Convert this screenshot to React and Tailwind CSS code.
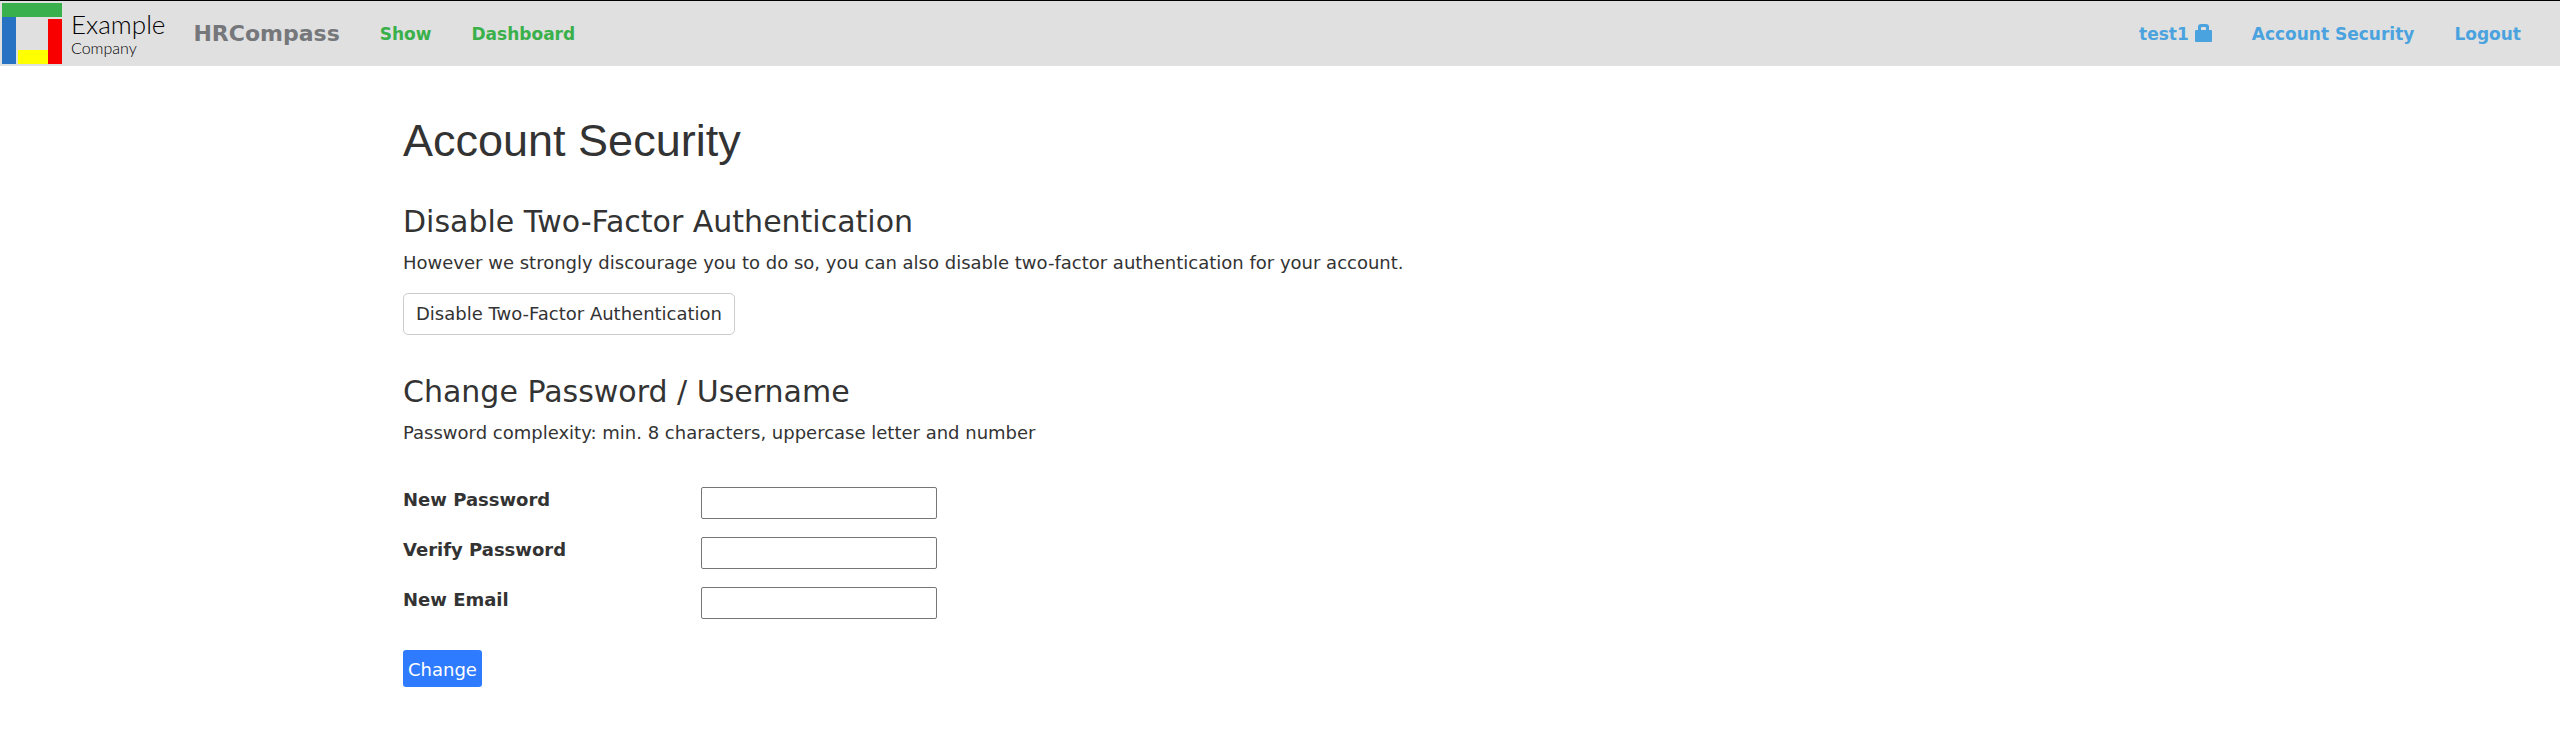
const navLink = "text-[17px] leading-6 font-bold hover:underline";

const fields = [
  { id: "new-password", label: "New Password", type: "password" },
  { id: "verify-password", label: "Verify Password", type: "password" },
  { id: "new-email", label: "New Email", type: "email" },
];

function Logo() {
  return (
    <a href="#home" aria-label="Example Company" className="flex items-center gap-2 pl-0.5 text-black">
      <svg width="61" height="63" viewBox="0 0 61 63" aria-hidden="true">
        <rect width="61" height="63" fill="#d6e6d8" opacity="0.5" />
        <rect x="14" y="15" width="32" height="33" fill="#e0e0e0" />
        <rect x="0" y="1" width="60" height="14" fill="#39b04c" />
        <rect x="0" y="15" width="14" height="47" fill="#2872c4" />
        <rect x="16" y="48" width="30" height="14" fill="#ffff00" />
        <rect x="46" y="17" width="14" height="45" fill="#f80000" />
      </svg>
      <span className="flex flex-col gap-0.5 pb-0.5 font-[Lato,sans-serif]">
        <span className="text-[26px] leading-7 font-light">Example</span>
        <span className="text-base leading-4 font-light">Company</span>
      </span>
    </a>
  );
}

function LockIcon() {
  return (
    <svg width="17" height="18" viewBox="0 0 17 18" fill="#4aa3df" className="mb-0.5" aria-hidden="true">
      <path fillRule="evenodd" d="M1 6H3V3Q3 0 6 0H11Q14 0 14 3V6H16Q17 6 17 7V17Q17 18 16 18H1Q0 18 0 17V7Q0 6 1 6ZM6 6H11V4Q11 3 10 3H7Q6 3 6 4Z" />
    </svg>
  );
}

export default function App() {
  return (
    <div className="bg-white font-[Verdana,'DejaVu_Sans',sans-serif] text-lg leading-6 text-[#333]">
      <header className="flex min-h-[66px] items-center justify-between border-t border-black bg-[#e0e0e0] pr-[39px]">
        <div className="flex items-center">
          <Logo />
          <nav className="flex items-center gap-10 pl-7 text-[#39b04a]">
            <a href="#home" className="text-[22px] leading-6 font-bold text-[#75777b]">HRCompass</a>
            <a href="#show" className={navLink}>Show</a>
            <a href="#dashboard" className={navLink}>Dashboard</a>
          </nav>
        </div>
        <nav className="flex items-center gap-10 text-[#4aa3df]">
          <a href="#profile" className="flex items-center gap-1.5 text-[17px] leading-6 font-bold">
            test1
            <LockIcon />
          </a>
          <a href="#security" className={navLink}>Account Security</a>
          <a href="#logout" className={navLink}>Logout</a>
        </nav>
      </header>

      <main className="mx-auto w-[1754px] max-w-full pt-[50px]">
        <h1 className="font-['Liberation_Sans',Arial,sans-serif] text-[45px] leading-[50px]">Account Security</h1>

        <section className="pt-[39px]">
          <h2 className="text-[30px] leading-[34px]">Disable Two-Factor Authentication</h2>
          <p className="pt-3">
            However we strongly discourage you to do so, you can also disable two-factor authentication for your account.
          </p>
          <button type="button" className="mt-[18px] rounded-[5px] border border-[#ccc] px-3 py-2">
            Disable Two-Factor Authentication
          </button>
        </section>

        <section className="pt-10">
          <h2 className="text-[30px] leading-[34px]">Change Password / Username</h2>
          <p className="pt-3">Password complexity: min. 8 characters, uppercase letter and number</p>
          <form className="pt-[42px]">
            {fields.map((f) => (
              <div key={f.id} className="flex items-start pb-[18px]">
                <label htmlFor={f.id} className="w-[298px] leading-[26px] font-bold">{f.label}</label>
                <input id={f.id} type={f.type} className="h-8 w-[236px] rounded-[2px] border border-[#767676] px-1" />
              </div>
            ))}
            <button type="button" className="mt-[13px] rounded-[3px] bg-[#2e7bff] px-[5px] pt-2 pb-[5px] text-white">Change</button>
          </form>
        </section>
      </main>
    </div>
  );
}
